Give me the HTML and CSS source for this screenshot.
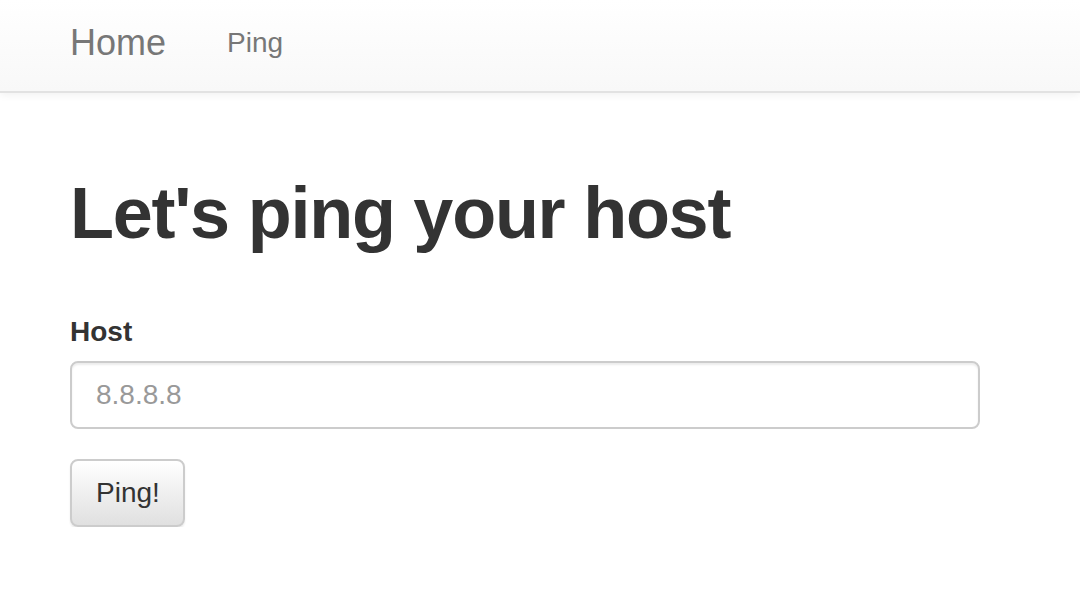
FILE: index.html
```html
<!DOCTYPE html>
<html>
<head>
<meta charset="utf-8">
<link rel="stylesheet" href="styles.css">
</head>
<body>
<nav class="navbar">
  <div class="nav-inner">
    <a class="brand" href="#">Home</a>
    <a class="nav-link" href="#">Ping</a>
  </div>
</nav>
<main class="container">
  <h1 class="title">Let's ping your host</h1>
  <form class="form">
    <label class="label" for="host">Host</label>
    <input class="input" id="host" type="text" placeholder="8.8.8.8">
    <button class="btn" type="button">Ping!</button>
  </form>
</main>
</body>
</html>
```
FILE: styles.css
```css
* { box-sizing: border-box; }
html, body { margin: 0; padding: 0; background: #fff; }
body {
  font-family: "Liberation Sans", Arial, Helvetica, sans-serif;
  color: #333;
}
.navbar {
  height: 93px;
  background: linear-gradient(to bottom, #ffffff 0%, #f8f8f8 100%);
  border-bottom: 2px solid #e2e2e2;
  box-shadow: 0 2px 8px rgba(0,0,0,0.06);
}
.nav-inner {
  display: flex;
  align-items: center;
  height: 100%;
  padding-left: 70px;
  padding-bottom: 6px;
}
.brand {
  font-size: 36px;
  color: #777;
  text-decoration: none;
  margin-right: 61px;
}
.nav-link {
  font-size: 28px;
  color: #777;
  text-decoration: none;
}
.container {
  padding-left: 70px;
}
.title {
  font-size: 72px;
  font-weight: bold;
  letter-spacing: -1.25px;
  margin: 0;
  padding-top: 80px;
  line-height: 80px;
  color: #333;
}
.form {
  display: flex;
  flex-direction: column;
  align-items: flex-start;
  margin-top: 63px;
}
.label {
  font-size: 28px;
  font-weight: bold;
  line-height: 32px;
  margin-bottom: 13px;
}
.input {
  width: 910px;
  height: 68px;
  border: 2px solid #ccc;
  border-radius: 8px;
  padding: 0 24px;
  font-family: inherit;
  font-size: 28px;
  color: #555;
  box-shadow: inset 0 2px 2px rgba(0,0,0,0.075);
  outline: none;
}
.input::placeholder { color: #999; }
.btn {
  margin-top: 30px;
  height: 68px;
  padding: 0 23px 0 24px;
  font-family: inherit;
  font-size: 28px;
  color: #333;
  border: 2px solid #ccc;
  border-radius: 8px;
  background: linear-gradient(to bottom, #ffffff 0%, #e0e0e0 100%);
  box-shadow: 0 2px 2px rgba(0,0,0,0.08);
}
```
